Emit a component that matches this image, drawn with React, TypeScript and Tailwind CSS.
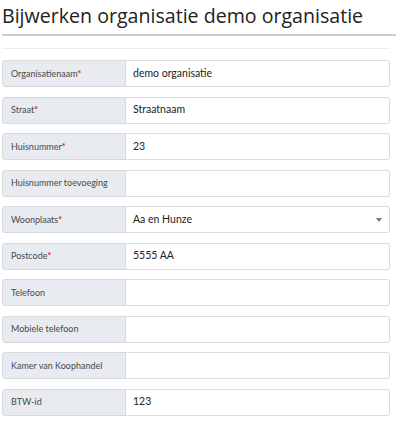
import React from 'react';

type Field = {
  label: string;
  value: string;
  required?: boolean;
  select?: boolean;
};

const fields: Field[] = [
  { label: 'Organisatienaam', value: 'demo organisatie', required: true },
  { label: 'Straat', value: 'Straatnaam', required: true },
  { label: 'Huisnummer', value: '23', required: true },
  { label: 'Huisnummer toevoeging', value: '' },
  { label: 'Woonplaats', value: 'Aa en Hunze', required: true, select: true },
  { label: 'Postcode', value: '5555 AA', required: true },
  { label: 'Telefoon', value: '' },
  { label: 'Mobiele telefoon', value: '' },
  { label: 'Kamer van Koophandel', value: '' },
  { label: 'BTW-id', value: '123' },
];

const Row = ({ field }: { field: Field }) => (
  <div className="flex h-[27px] mb-[9.5px]" style={{ fontFamily: 'Lato, "Open Sans", sans-serif' }}>
    <div className="w-[124px] shrink-0 flex items-center pl-2 bg-[#e8ebef] border border-[#d6d9dd] rounded-l-[3px] text-[9px] text-[#4a4a4a] whitespace-nowrap">
      <span>{field.label}</span>
      {field.required && <span className="text-[#e0262b] font-bold">*</span>}
    </div>
    <div className="flex-1 flex items-center pl-[7px] pr-2 bg-white border border-l-0 border-[#dcdcdc] rounded-r-[3px] text-[10.5px] text-[#222]">
      <span className="flex-1">{field.value}</span>
      {field.select && (
        <svg width="6" height="4" viewBox="0 0 6 4" className="mr-[-1px]">
          <polygon points="0,0 6,0 3,4" fill="#777" />
        </svg>
      )}
    </div>
  </div>
);

const App = () => {
  return (
    <div className="w-[396px] h-[421px] bg-white overflow-hidden" style={{ fontFamily: '"Open Sans", sans-serif' }}>
      <h1 className="pl-[2px] pt-[1px] text-[19.6px] leading-[30px] text-[#222] font-normal">
        Bijwerken organisatie demo organisatie
      </h1>
      <div className="ml-[2px] mt-[3px] h-[2px] bg-[#c9ced6]"></div>
      <div className="ml-[2px] mr-[6px] mt-[12px] border-t border-[#ececec] pt-[11px]">
        {fields.map((f) => (
          <Row key={f.label} field={f} />
        ))}
      </div>
    </div>
  );
};

export default App;
